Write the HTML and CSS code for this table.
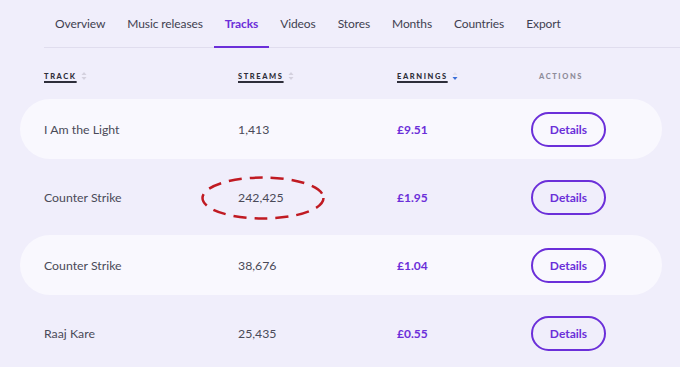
FILE: index.html
```html
<!DOCTYPE html>
<html>
<head>
<meta charset="utf-8">
<link rel="stylesheet" href="styles.css">
</head>
<body>
<div class="page">
  <nav class="tabs">
    <a class="tab">Overview</a>
    <a class="tab">Music releases</a>
    <a class="tab active">Tracks</a>
    <a class="tab">Videos</a>
    <a class="tab">Stores</a>
    <a class="tab">Months</a>
    <a class="tab">Countries</a>
    <a class="tab">Export</a>
  </nav>
  <div class="table">
    <div class="head">
      <div class="hcell"><span class="hlabel">TRACK</span><svg class="sort" viewBox="0 0 6 10" width="6" height="10"><path d="M3 1 L5.5 4 H0.5Z" fill="#d4d1de"/><path d="M3 9 L5.5 6 H0.5Z" fill="#d4d1de"/></svg></div>
      <div class="hcell"><span class="hlabel">STREAMS</span><svg class="sort" viewBox="0 0 6 10" width="6" height="10"><path d="M3 1 L5.5 4 H0.5Z" fill="#d4d1de"/><path d="M3 9 L5.5 6 H0.5Z" fill="#d4d1de"/></svg></div>
      <div class="hcell"><span class="hlabel">EARNINGS</span><svg class="sort" viewBox="0 0 6 10" width="6" height="10"><path d="M3 1 L5.5 4 H0.5Z" fill="#e2e0ea"/><path d="M0.5 6 H5.5 L3 9Z" fill="#3b6fd8"/></svg></div>
      <div class="hcell actions"><span class="hlabel plain">ACTIONS</span></div>
    </div>
    <div class="row alt">
      <div class="name">I Am the Light</div>
      <div class="streams">1,413</div>
      <div class="earn">£9.51</div>
      <div class="act"><button class="btn">Details</button></div>
    </div>
    <div class="row">
      <div class="name">Counter Strike</div>
      <div class="streams"><span class="marked">242,425<svg class="ring" viewBox="0 0 126 46"><ellipse cx="63" cy="23" rx="60.5" ry="20.5" fill="none" stroke="#c01a22" stroke-width="2.5" stroke-dasharray="13 8"/></svg></span></div>
      <div class="earn">£1.95</div>
      <div class="act"><button class="btn">Details</button></div>
    </div>
    <div class="row alt">
      <div class="name">Counter Strike</div>
      <div class="streams">38,676</div>
      <div class="earn">£1.04</div>
      <div class="act"><button class="btn">Details</button></div>
    </div>
    <div class="row">
      <div class="name">Raaj Kare</div>
      <div class="streams">25,435</div>
      <div class="earn">£0.55</div>
      <div class="act"><button class="btn">Details</button></div>
    </div>
  </div>
</div>
</body>
</html>
```
FILE: styles.css
```css
* { box-sizing: border-box; }
html, body { margin: 0; padding: 0; }
body {
  background: #f0eefb;
  font-family: "Lato", "Noto Sans", sans-serif;
  color: #454555;
  width: 680px;
  height: 367px;
  overflow: hidden;
}
.tabs {
  display: flex;
  margin-left: 44px;
  border-bottom: 1px solid #e0ddee;
  height: 48px;
}
.tab {
  display: block;
  padding: 16px 11px 0;
  font-size: 12px;
  letter-spacing: -0.1px;
  line-height: 16px;
  color: #3f3f50;
  height: 48px;
  margin-bottom: -1px;
  border-bottom: 2px solid transparent;
}
.tab.active {
  color: #6b2fd9;
  font-weight: 700;
  border-bottom-color: #6b2fd9;
}
.table { padding: 0 18px 0 20px; }
.head {
  display: grid;
  grid-template-columns: 194px 159px 134px 1fr;
  padding: 23px 0 0 24px;
  height: 51px;
}
.hcell { display: flex; align-items: center; height: 10px; }
.hlabel {
  font-size: 7.5px;
  font-weight: 900;
  letter-spacing: 1.6px;
  color: #2e2e3a;
  text-decoration: underline;
  text-decoration-thickness: 1.5px;
  text-underline-offset: 2px;
}
.hlabel.plain { text-decoration: none; color: #8e8c9a; }
.actions { padding-left: 8px; }
.sort { margin-left: 4px; }
.row {
  display: grid;
  grid-template-columns: 194px 159px 134px 1fr;
  align-items: center;
  height: 60px;
  margin-bottom: 8px;
  padding-left: 24px;
  border-radius: 30px;
  font-size: 12.3px;
}
.row.alt { background: #f9f8fe; }
.name { color: #4a4a58; }
.streams { color: #4a4a58; }
.marked { position: relative; display: inline-block; }
.ring {
  position: absolute;
  left: -38px;
  top: -15px;
  width: 126px;
  height: 46px;
  pointer-events: none;
}
.earn { color: #6b2fd9; font-weight: 700; font-size: 12px; }
.act { display: flex; }
.btn {
  width: 75px;
  height: 35px;
  border: 2px solid #6b2fd9;
  border-radius: 18px;
  background: transparent;
  color: #6b2fd9;
  font-family: "Lato", "Noto Sans", sans-serif;
  font-weight: 700;
  font-size: 12px;
  padding: 0;
}
```
